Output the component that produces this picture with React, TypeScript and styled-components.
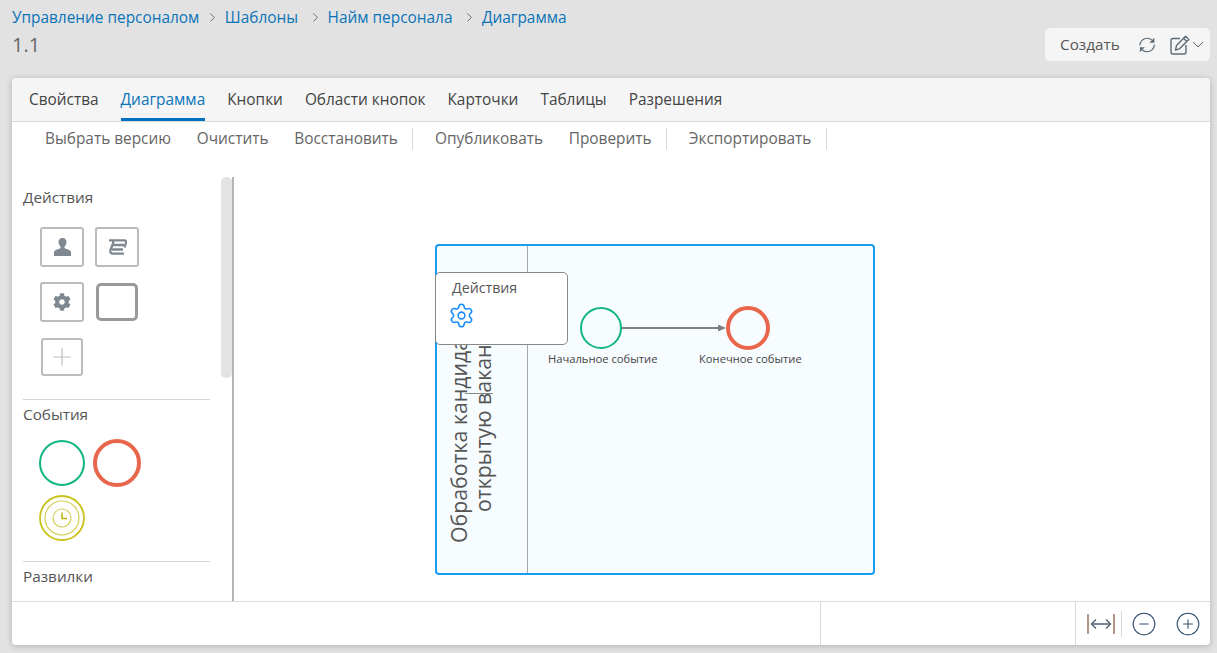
import React from 'react'
import styled, { createGlobalStyle } from 'styled-components'
import { ChevronRight, Settings, CircleMinus, CirclePlus, Plus } from 'lucide-react'
import { FaCog } from 'react-icons/fa'

const GlobalStyle = createGlobalStyle`
	html, body {
		margin: 0;
		height: 100%;
		overflow: hidden;
		background: #e2e2e2;
		font-family: "Open Sans", "Noto Sans", sans-serif;
		color: #555;
	}
`

const crumbs = ['Управление персоналом', 'Шаблоны', 'Найм персонала', 'Диаграмма']
const tabs = ['Свойства', 'Диаграмма', 'Кнопки', 'Области кнопок', 'Карточки', 'Таблицы', 'Разрешения']
const tools = [
	{ label: 'Выбрать версию' },
	{ label: 'Очистить' },
	{ label: 'Восстановить', sep: true },
	{ label: 'Опубликовать' },
	{ label: 'Проверить', sep: true },
	{ label: 'Экспортировать', sep: true },
]

const UserIcon = () => (
	<svg width="17" height="18" viewBox="0 0 17 18" fill="#7f8890">
		<path d="M8.500 0C11 0 12.500 1.800 12.500 4c0 1.900-.8 3.500-2 4.500v1.300c0 .6.900 1 2.500 1.400 2.500.6 4 1.400 4 3.300V18H0v-3.500c0-1.900 1.500-2.700 4-3.300 1.600-.4 2.500-.8 2.500-1.400V8.500c-1.200-1-2-2.600-2-4.500 0-2.200 1.500-4 4-4z" />
	</svg>
)

const ScrollIcon = () => (
	<svg width="19" height="16" viewBox="0 0 19 16" fill="none" stroke="#7f8890" strokeWidth="2.300">
		<path d="M1 1.400H16.500c1.500 0 2 1 1.500 2.500L16.500 8.500" />
		<path d="M5 1.400C5.800 3 5 5 4 7L2.500 11c-.8 2.500.5 3.600 2.500 3.600H16" />
		<path d="M5 6H16" />
		<path d="M4 10.500H15" />
	</svg>
)

const SyncIcon = () => (
	<svg width="18" height="18" viewBox="0 0 18 18" fill="none">
		<path d="M1 9.500C1 5 4.500 1.500 9 1.500c2.200 0 4 .8 5.300 2.200" stroke="#5f6b75" strokeWidth="1.300" />
		<path d="M17 8.500c0 4.500-3.500 8-8 8-2.200 0-4-.8-5.300-2.200" stroke="#5f6b75" strokeWidth="1.300" />
		<path d="M17 1v5.500h-5.500z" fill="#5f6b75" />
		<path d="M1 17v-5.500h5.500z" fill="#5f6b75" />
	</svg>
)

const EditIcon = () => (
	<svg width="20" height="20" viewBox="0 0 20 20" fill="none" stroke="#5f6b75" strokeWidth="1.400">
		<path d="M10 3.500H3a2 2 0 0 0-2 2V17a2 2 0 0 0 2 2h11a2 2 0 0 0 2-2v-7" />
		<path d="M15.500 1.200 18.800 4.500 9.500 13.800 5.500 15 6.500 10.500z" strokeLinejoin="round" />
		<path d="M13.500 3.200 16.800 6.500" />
	</svg>
)

const CaretIcon = () => (
	<svg width="12" height="7" viewBox="0 0 12 7" fill="none" stroke="#666" strokeWidth="1">
		<path d="M1 1 6 6 11 1" />
	</svg>
)

const FitIcon = () => (
	<svg width="30" height="24" viewBox="0 0 30 24" fill="none" stroke="#4d5f70" strokeWidth="1.300">
		<path d="M2 2v20" stroke="#8a5a44" />
		<path d="M28 2v20" stroke="#8a5a44" />
		<path d="M6 12h18" />
		<path d="M10 7.500 5.500 12l4.500 4.500" />
		<path d="M20 7.500 24.500 12 20 16.500" />
	</svg>
)

const TimerIcon = () => (
	<svg width="46" height="46" viewBox="0 0 46 46" fill="none">
		<circle cx="23" cy="23" r="22" stroke="#c9c21a" strokeWidth="1.800" />
		<circle cx="23" cy="23" r="17" stroke="#d4ce55" strokeWidth="1.200" />
		<circle cx="23" cy="23" r="9" stroke="#d4ce55" strokeWidth="1.200" />
		<path d="M23 17.500V23.500H28" stroke="#bdb500" strokeWidth="1.500" />
	</svg>
)

const App: React.FC = () => {
	return (
		<>
			<GlobalStyle />
			<Header>
				<TitleBlock>
					<Breadcrumbs>
						{crumbs.map((crumb, i) => (
							<React.Fragment key={crumb}>
								{i > 0 && <ChevronRight size={15} strokeWidth={1.3} color="#555" />}
								<Crumb>{crumb}</Crumb>
							</React.Fragment>
						))}
					</Breadcrumbs>
					<PageTitle>1.1</PageTitle>
				</TitleBlock>
				<Actions>
					<ActionText>Создать</ActionText>
					<SyncIcon />
					<EditGroup>
						<EditIcon />
						<CaretIcon />
					</EditGroup>
				</Actions>
			</Header>
			<Card>
				<Tabs>
					{tabs.map((tab) => (
						<Tab key={tab} $active={tab === 'Диаграмма'}>{tab}</Tab>
					))}
				</Tabs>
				<Toolbar>
					{tools.map((tool) => (
						<ToolButton key={tool.label} $sep={tool.sep}>{tool.label}</ToolButton>
					))}
				</Toolbar>
				<Workspace>
					<Sidebar>
						<Section>
							<SectionTitle>Действия</SectionTitle>
							<Palette>
								<PaletteButton><UserIcon /></PaletteButton>
								<PaletteButton><ScrollIcon /></PaletteButton>
								<PaletteButton><FaCog size={18} color="#7f8890" /></PaletteButton>
								<BlankTask />
								<AddButton><Plus size={28} strokeWidth={1} color="#bbb" /></AddButton>
							</Palette>
						</Section>
						<Section>
							<SectionTitle>События</SectionTitle>
							<EventPalette>
								<EventCircle $color="#12b584" $width={2} $size={46} />
								<EventCircle $color="#e8674c" $width={4} $size={48} />
								<TimerIcon />
							</EventPalette>
						</Section>
						<Section>
							<SectionTitle>Развилки</SectionTitle>
						</Section>
						<ScrollThumb />
					</Sidebar>
					<Canvas>
						<Pool>
							<LaneDivider />
							<LaneLabel>Обработка кандидатов на<br />открытую вакансию</LaneLabel>
							<TextCursor />
							<StartNode />
							<StartLabel>Начальное событие</StartLabel>
							<FlowLine width="110" height="12" viewBox="0 0 110 12">
								<path d="M0 6H98" stroke="#808080" strokeWidth="2" />
								<path d="M96 2.500 104 6 96 9.500z" fill="#808080" />
							</FlowLine>
							<EndNode />
							<EndLabel>Конечное событие</EndLabel>
							<Popup>
								<PopupTitle>Действия</PopupTitle>
								<Settings size={27} strokeWidth={1.4} color="#1a8cff" />
							</Popup>
						</Pool>
					</Canvas>
				</Workspace>
				<Footer>
					<FooterCell />
					<FooterCell $width={254} />
					<ZoomCell>
						<FitIcon />
						<ZoomDivider />
						<CircleMinus size={26} strokeWidth={1} color="#33506e" />
						<ZoomPlus><CirclePlus size={26} strokeWidth={1} color="#33506e" /></ZoomPlus>
					</ZoomCell>
				</Footer>
			</Card>
		</>
	)
}

const Header = styled.header`
	box-sizing: border-box;
	height: 78px;
	padding: 6px 7px 17px 12px;
	display: flex;
	justify-content: space-between;
	align-items: flex-end;
`

const TitleBlock = styled.div`
	padding-bottom: 1px;
`

const Breadcrumbs = styled.nav`
	display: flex;
	align-items: center;
	gap: 5px;
	height: 20px;
	margin-bottom: 3px;
`

const Crumb = styled.a`
	font-size: 15.4px;
	color: #0b74b8;
	padding-right: 4.5px;
	&:first-child {
		margin-right: -4px;
	}
`

const PageTitle = styled.div`
	font-size: 20px;
	line-height: 30px;
	color: #666;
`

const Actions = styled.div`
	box-sizing: border-box;
	width: 165px;
	height: 33px;
	padding: 0 6px 0 15px;
	display: flex;
	align-items: center;
	background: #f5f5f5;
	border-radius: 5px;
`

const ActionText = styled.span`
	font-size: 15.3px;
	line-height: 20px;
	padding-bottom: 2px;
	color: #555;
	margin-right: 19px;
`

const EditGroup = styled.span`
	display: flex;
	align-items: center;
	gap: 2px;
	margin-left: 15px;
`

const Card = styled.main`
	margin: 0 7px 0 12px;
	height: 567px;
	display: flex;
	flex-direction: column;
	background: #fff;
	border-radius: 4px;
	box-shadow: 0 1px 6px rgba(0, 0, 0, 0.22);
	overflow: hidden;
`

const Tabs = styled.div`
	box-sizing: border-box;
	height: 44px;
	padding: 0 17px;
	display: flex;
	gap: 22px;
	background: #f5f5f5;
	border-bottom: 1px solid #d9d9d9;
`

const Tab = styled.div<{ $active?: boolean }>`
	box-sizing: border-box;
	height: 43px;
	padding-top: 1px;
	font-size: 15.4px;
	line-height: 42px;
	color: ${(props) => (props.$active ? '#0b74b8' : '#444')};
	border-bottom: 3px solid ${(props) => (props.$active ? '#0070c0' : 'transparent')};
`

const Toolbar = styled.div`
	box-sizing: border-box;
	height: 55px;
	padding: 6px 0 0 33px;
	display: flex;
	align-items: flex-start;
	gap: 25.7px;
`

const ToolButton = styled.div<{ $sep?: boolean }>`
	font-size: 15.4px;
	line-height: 22px;
	color: #666;
	${(props) =>
		props.$sep &&
		`
		padding-right: 14.5px;
		margin-right: -4px;
		border-right: 1px solid #d9d9d9;
	`}
`

const Workspace = styled.div`
	flex: 1;
	min-height: 0;
	display: flex;
`

const Sidebar = styled.aside`
	position: relative;
	box-sizing: border-box;
	width: 222px;
	padding: 6px 22px 0 11px;
	border-right: 2px solid #b5b5b5;
	overflow: hidden;
`

const Section = styled.section`
	border-bottom: 1px solid #d6d6d6;
	&:last-of-type {
		border-bottom: none;
	}
`

const SectionTitle = styled.h3`
	margin: 0;
	padding-top: 3px;
	font-size: 15.3px;
	font-weight: 400;
	line-height: 22px;
	color: #555;
`

const Palette = styled.div`
	display: grid;
	grid-template-columns: 44px 44px;
	column-gap: 11px;
	row-gap: 15px;
	padding: 19px 0 23px 17px;
`

const PaletteButton = styled.div`
	box-sizing: border-box;
	height: 40px;
	display: flex;
	align-items: center;
	justify-content: center;
	border: 2px solid #bbb;
	border-radius: 3px;
`

const BlankTask = styled.div`
	box-sizing: border-box;
	width: 42px;
	height: 38px;
	margin: 1px;
	border: 3px solid #9a9a9a;
	border-radius: 5px;
`

const AddButton = styled(PaletteButton)`
	width: 42px;
	height: 38px;
	margin-left: 1px;
	margin-top: 1px;
`

const EventPalette = styled.div`
	display: grid;
	grid-template-columns: 46px 48px;
	column-gap: 8px;
	row-gap: 8px;
	align-items: center;
	padding: 14px 0 20px 16px;
`

const EventCircle = styled.div<{ $color: string; $width: number; $size: number }>`
	box-sizing: border-box;
	width: ${(props) => props.$size}px;
	height: ${(props) => props.$size}px;
	border: ${(props) => props.$width}px solid ${(props) => props.$color};
	border-radius: 50%;
`

const ScrollThumb = styled.div`
	position: absolute;
	top: 0;
	right: 0;
	width: 11px;
	height: 201px;
	background: #e3e3e3;
	border-radius: 5px;
`

const Canvas = styled.div`
	position: relative;
	flex: 1;
	overflow: hidden;
`

const Pool = styled.div`
	position: absolute;
	left: 201px;
	top: 67px;
	box-sizing: border-box;
	width: 440px;
	height: 331px;
	background: #f7fcff;
	border: 2px solid #1a9cf0;
	border-radius: 4px;
`

const LaneDivider = styled.div`
	position: absolute;
	left: 90px;
	top: 0;
	bottom: 0;
	width: 1px;
	background: #a8a8a8;
`

const LaneLabel = styled.div`
	position: absolute;
	left: 10px;
	top: 12px;
	width: 48px;
	height: 300px;
	writing-mode: vertical-rl;
	transform: rotate(180deg);
	text-align: center;
	font-size: 21.3px;
	line-height: 24px;
	color: #555;
	white-space: nowrap;
`

const TextCursor = styled.div`
	position: absolute;
	left: 28px;
	top: 147px;
	width: 28px;
	height: 1px;
	background: #888;
`

const StartNode = styled.div`
	position: absolute;
	left: 143px;
	top: 61px;
	box-sizing: border-box;
	width: 42px;
	height: 42px;
	border: 2px solid #12b584;
	border-radius: 50%;
`

const EndNode = styled.div`
	position: absolute;
	left: 289px;
	top: 60px;
	box-sizing: border-box;
	width: 44px;
	height: 44px;
	border: 4px solid #e8674c;
	border-radius: 50%;
`

const FlowLine = styled.svg`
	position: absolute;
	left: 185px;
	top: 76px;
`

const NodeLabel = styled.div`
	position: absolute;
	top: 105px;
	font-size: 11.2px;
	line-height: 16px;
	color: #444;
	white-space: nowrap;
`

const StartLabel = styled(NodeLabel)`
	left: 111px;
`

const EndLabel = styled(NodeLabel)`
	left: 262px;
`

const Popup = styled.div`
	position: absolute;
	left: -2px;
	top: 26px;
	box-sizing: border-box;
	width: 133px;
	height: 73px;
	padding: 4px 0 0 12px;
	background: #fff;
	border: 1px solid #888;
	border-radius: 5px;
`

const PopupTitle = styled.div`
	font-size: 14.2px;
	line-height: 22px;
	color: #555;
	margin: 0 0 3px 4px;
`

const Footer = styled.footer`
	box-sizing: border-box;
	height: 44px;
	display: flex;
	border-top: 1px solid #dcdcdc;
`

const FooterCell = styled.div<{ $width?: number }>`
	flex: ${(props) => (props.$width ? `0 0 ${props.$width}px` : 1)};
	border-right: 1px solid #d9d9d9;
`

const ZoomCell = styled.div`
	flex: 0 0 133px;
	box-sizing: border-box;
	padding: 0 9px 0 10px;
	display: flex;
	align-items: center;
	gap: 9px;
`

const ZoomDivider = styled.div`
	width: 1px;
	height: 26px;
	margin-left: -4px;
	background: #d9d9d9;
`

const ZoomPlus = styled.span`
	display: flex;
	margin-left: 9px;
`

export default App
